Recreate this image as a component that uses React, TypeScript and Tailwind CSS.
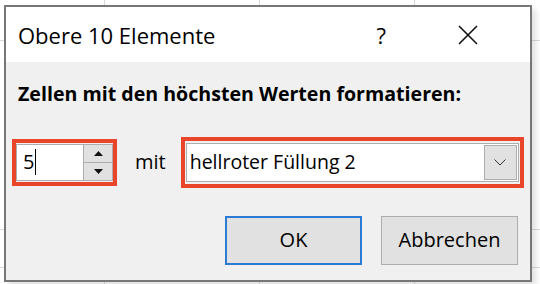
import React from 'react';

const font = { fontFamily: '"Open Sans", "Noto Sans", sans-serif' };

export default function App() {
  return (
    <div className="relative w-[540px] h-[284px] overflow-hidden bg-white" style={font}>
      {/* excel grid behind the dialog */}
      <div className="absolute left-0 top-[40px] w-full h-px bg-[#d9d9d9]" />
      <div className="absolute left-0 top-[229px] w-full h-px bg-[#d9d9d9]" />
      <div className="absolute left-0 top-[267px] w-full h-px bg-[#d9d9d9]" />
      <div className="absolute left-[104px] top-0 h-full w-px bg-[#d9d9d9]" />
      <div className="absolute left-[259px] top-0 h-full w-px bg-[#d9d9d9]" />
      <div className="absolute left-[414px] top-0 h-full w-px bg-[#d9d9d9]" />

      <div className="relative ml-[4px] mt-[5px] w-[528px] h-[277px] border-2 border-[#777777] bg-[#f0f0f0] flex flex-col shadow-[4px_4px_6px_rgba(0,0,0,0.12)]">
        <div className="h-[55px] bg-white flex items-center pl-[12px] text-[#000] shrink-0">
          <span className="text-[22px] leading-none mt-[1px]">Obere 10 Elemente</span>
          <span className="ml-auto text-[22px] leading-none mr-[72px]">?</span>
          <svg width="20" height="20" viewBox="0 0 20 20" className="mr-[52px]">
            <path d="M1 1 L19 19 M19 1 L1 19" stroke="#111" strokeWidth="1.6" fill="none" />
          </svg>
        </div>

        <div className="flex-1 flex flex-col">
          <div className="pl-[12px] pt-[22px] text-[19.6px] font-bold leading-none text-black">
            Zellen mit den höchsten Werten formatieren:
          </div>

          <div className="flex items-center mt-[33px] pl-[6px]">
            <div className="w-[105px] h-[47px] border-4 border-[#e8452b] flex items-center">
              <div className="flex-1 h-[37px] bg-white border border-[#adadad] border-r-0 flex items-center pl-[6px]">
                <span className="text-[20px] leading-none text-black">5</span>
                <span className="w-px h-[26px] bg-black ml-[1px]" />
              </div>
              <div className="w-[30px] h-[37px] flex flex-col border border-[#adadad]">
                <div className="flex-1 bg-[#e1e1e1] border-b border-[#adadad] flex items-center justify-center">
                  <svg width="9" height="5" viewBox="0 0 9 5"><path d="M0 5 L4.5 0 L9 5Z" fill="#111" /></svg>
                </div>
                <div className="flex-1 bg-[#e1e1e1] flex items-center justify-center">
                  <svg width="9" height="5" viewBox="0 0 9 5"><path d="M0 0 L4.5 5 L9 0Z" fill="#111" /></svg>
                </div>
              </div>
            </div>

            <span className="ml-[18px] text-[20px] leading-none text-black">mit</span>

            <div className="ml-[15px] w-[343px] h-[51px] border-4 border-[#e8452b] flex items-center">
              <div className="flex-1 h-[39px] bg-white border border-[#adadad] flex items-center mx-[1px]">
                <span className="pl-[3px] text-[19.5px] leading-none text-black">hellroter Füllung 2</span>
                <div className="ml-auto mr-px w-[33px] h-[35px] bg-[#e1e1e1] border border-[#adadad] flex items-center justify-center">
                  <svg width="12" height="7" viewBox="0 0 12 7"><path d="M0.5 0.5 L6 6 L11.5 0.5" stroke="#333" strokeWidth="1" fill="none" /></svg>
                </div>
              </div>
            </div>
          </div>

          <div className="flex justify-end gap-[19px] mt-[28px] pr-[12px]">
            <button className="w-[137px] h-[49px] bg-[#e1e1e1] border-2 border-[#2b7bd6] text-[20px] text-black">OK</button>
            <button className="w-[137px] h-[49px] bg-[#e1e1e1] border border-[#adadad] text-[20px] text-black">Abbrechen</button>
          </div>
        </div>
      </div>
    </div>
  );
}
